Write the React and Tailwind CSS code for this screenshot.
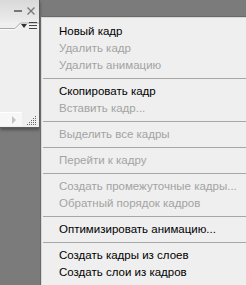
import React from "react";

const items = [
  { t: "Новый кадр", on: true },
  { t: "Удалить кадр" },
  { t: "Удалить анимацию" },
  "sep",
  { t: "Скопировать кадр", on: true },
  { t: "Вставить кадр..." },
  "sep",
  { t: "Выделить все кадры" },
  "sep",
  { t: "Перейти к кадру" },
  "sep",
  { t: "Создать промежуточные кадры..." },
  { t: "Обратный порядок кадров" },
  "sep",
  { t: "Оптимизировать анимацию...", on: true },
  "sep",
  { t: "Создать кадры из слоев", on: true },
  { t: "Создать слои из кадров", on: true },
  { t: "Сделать кадры одновременно" },
];

export default function App() {
  return (
    <div
      className="relative w-[246px] h-[285px] overflow-hidden bg-[#7b7b7b]"
      style={{ fontFamily: "'Liberation Sans', Arial, sans-serif" }}
    >
      {/* left palette panel */}
      <div className="w-[40px] h-[128px] bg-[#efefef] border-r border-b border-[#5c5c5c] flex flex-col shadow-[0_2px_3px_rgba(0,0,0,0.35)]">
        <div className="h-[22px] bg-gradient-to-b from-[#d9d9d9] to-[#ececec] flex items-center justify-end gap-[5px] pr-[4px]">
          <div className="w-[8px] h-[2px] bg-[#777]" />
          <svg width="8" height="8" viewBox="0 0 8 8">
            <path d="M0.5 0.5 L7.5 7.5 M7.5 0.5 L0.5 7.5" stroke="#777" strokeWidth="1.3" />
          </svg>
        </div>
        <div className="relative h-[10px]">
          <svg width="39" height="10" viewBox="0 0 39 10" className="absolute left-0 top-0">
            <path d="M0 7.5 H15.5 L21 2 H39" stroke="#fafafa" strokeWidth="1" fill="none" />
            <path d="M0 6.5 H15 L20.5 1 H39" stroke="#a8a8a8" strokeWidth="1" fill="none" />
          </svg>
          <div className="absolute right-[2px] top-[0px] flex items-center gap-[2px]">
            <svg width="6" height="4" viewBox="0 0 6 4">
              <path d="M0 0 H6 L3 4 Z" fill="#333" />
            </svg>
            <svg width="8" height="7" viewBox="0 0 8 7">
              <path d="M0 0.5 H8 M0 3.5 H8 M0 6.5 H8" stroke="#444" strokeWidth="1" />
            </svg>
          </div>
        </div>
        <div className="flex-1" />
        <div className="h-[16px] flex items-center">
          <div className="w-[22px] h-[14px] bg-[#f7f7f7] border-t border-[#fff] flex items-center justify-end pr-[6px]">
            <svg width="4" height="8" viewBox="0 0 4 8">
              <path d="M0 0 L4 4 L0 8 Z" fill="#c4c4c4" />
            </svg>
          </div>
          <div className="flex-1 flex justify-end items-end h-full pr-[2px] pb-[1px]">
            <svg width="10" height="10" viewBox="0 0 10 10">
              {[[8,0],[6,2],[8,2],[4,4],[6,4],[8,4],[2,6],[4,6],[6,6],[8,6],[0,8],[2,8],[4,8],[6,8],[8,8]].map(([x,y],i)=>(
                <rect key={i} x={x} y={y} width="1" height="1" fill="#666" />
              ))}
            </svg>
          </div>
        </div>
      </div>

      {/* context menu */}
      <div className="absolute left-[41px] top-[17px] w-[220px] h-[290px] bg-[#efefef] border-l border-t border-[#d8d8d8] shadow-[-1px_-1px_0_#6a6a6a] pt-[5px]">
        {items.map((it, i) =>
          it === "sep" ? (
            <div key={i} className="h-[9px] flex items-center pl-[1px]">
              <div className="w-full h-[1px] bg-[#a7a7a7]" />
            </div>
          ) : (
            <div
              key={i}
              className={`h-[17px] flex items-center pl-[17px] text-[11.5px] leading-none whitespace-nowrap ${
                it.on ? "text-black" : "text-[#a3a3a3]"
              }`}
            >
              {it.t}
            </div>
          )
        )}
      </div>
    </div>
  );
}
